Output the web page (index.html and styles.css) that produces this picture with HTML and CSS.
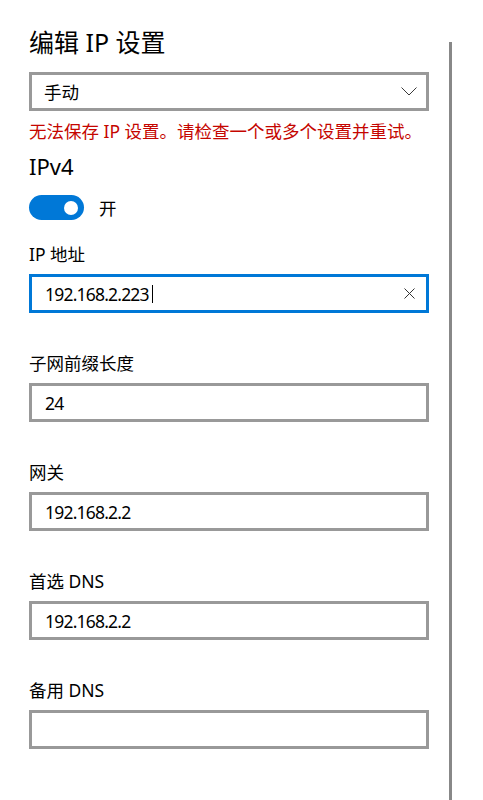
FILE: index.html
```html
<!DOCTYPE html>
<html lang="zh-CN">
<head>
<meta charset="utf-8">
<title>编辑 IP 设置</title>
<link rel="stylesheet" href="styles.css">
</head>
<body>
<div class="page">
  <main class="content">
    <h1 class="title">编辑 IP 设置</h1>
    <div class="select">
      <span class="select-text">手动</span>
      <svg class="chevron" width="16" height="9" viewBox="0 0 16 9"><path d="M0.5 0.5 L8 8 L15.5 0.5" fill="none" stroke="#3a3a3a" stroke-width="1"/></svg>
    </div>
    <p class="error">无法保存 IP 设置。请检查一个或多个设置并重试。</p>
    <h2 class="section">IPv4</h2>
    <div class="toggle-row">
      <span class="toggle"><span class="knob"></span></span>
      <span class="toggle-label">开</span>
    </div>
    <div class="fields">
      <div class="field first">
        <label class="label">IP 地址</label>
        <div class="input focused">
          <span class="value">192.168.2.223</span><span class="caret"></span>
          <svg class="clear" width="11" height="11" viewBox="0 0 11 11"><path d="M0.5 0.5 L10.5 10.5 M10.5 0.5 L0.5 10.5" fill="none" stroke="#333" stroke-width="1"/></svg>
        </div>
      </div>
      <div class="field">
        <label class="label">子网前缀长度</label>
        <div class="input"><span class="value">24</span></div>
      </div>
      <div class="field">
        <label class="label">网关</label>
        <div class="input"><span class="value">192.168.2.2</span></div>
      </div>
      <div class="field">
        <label class="label">首选 DNS</label>
        <div class="input"><span class="value">192.168.2.2</span></div>
      </div>
      <div class="field">
        <label class="label">备用 DNS</label>
        <div class="input"><span class="value"></span></div>
      </div>
    </div>
  </main>
  <div class="scrollbar"></div>
</div>
</body>
</html>
```

FILE: styles.css
```css
* { box-sizing: border-box; }
html, body { margin: 0; padding: 0; background: #fff; }
body {
  font-family: "Noto Sans", "Noto Sans CJK SC", sans-serif;
  color: #000;
  width: 483px;
  height: 800px;
  overflow: hidden;
}
.page {
  display: flex;
  height: 800px;
}
.content {
  width: 400px;
  margin-left: 29px;
  display: flex;
  flex-direction: column;
}
.title {
  margin: 25px 0 13px;
  font-size: 25px;
  font-weight: 400;
  line-height: 34px;
  height: 34px;
}
.select {
  height: 39px;
  border: 3px solid #999;
  display: flex;
  align-items: center;
  justify-content: space-between;
  padding: 0 9px 0 12px;
  font-size: 17.5px;
}
.chevron { display: block; }
.error {
  margin: 8px 0 0;
  color: #c50500;
  font-size: 17.5px;
  line-height: 24px;
  white-space: nowrap;
}
.section {
  margin: 8px 0 0;
  font-size: 22px;
  font-weight: 400;
  line-height: 30px;
}
.toggle-row {
  margin-top: 14px;
  display: flex;
  align-items: center;
  height: 25px;
}
.toggle {
  width: 55px;
  height: 25px;
  border-radius: 12.5px;
  background: #0078d7;
  display: flex;
  align-items: center;
  justify-content: flex-end;
  padding-right: 6px;
}
.knob {
  width: 14px;
  height: 14px;
  border-radius: 50%;
  background: #fff;
}
.toggle-label {
  margin-left: 15px;
  font-size: 17.5px;
}
.fields {
  margin-top: 22px;
  display: flex;
  flex-direction: column;
  gap: 38px;
}
.field {
  display: flex;
  flex-direction: column;
  gap: 8px;
}
.label {
  font-size: 17.5px;
  line-height: 24px;
}
.input {
  height: 39px;
  border: 3px solid #999;
  display: flex;
  align-items: center;
  padding: 0 11px 0 13px;
  font-size: 17.5px;
}
.input.focused { border-color: #0078d7; }
.value { white-space: pre; letter-spacing: -0.8px; }
.caret {
  width: 1px;
  height: 18px;
  background: #000;
  margin-left: 3px;
}
.clear { margin-left: auto; display: block; }
.scrollbar {
  width: 3px;
  margin-left: 20px;
  margin-top: 42px;
  height: 758px;
  background: #888;
}
```
